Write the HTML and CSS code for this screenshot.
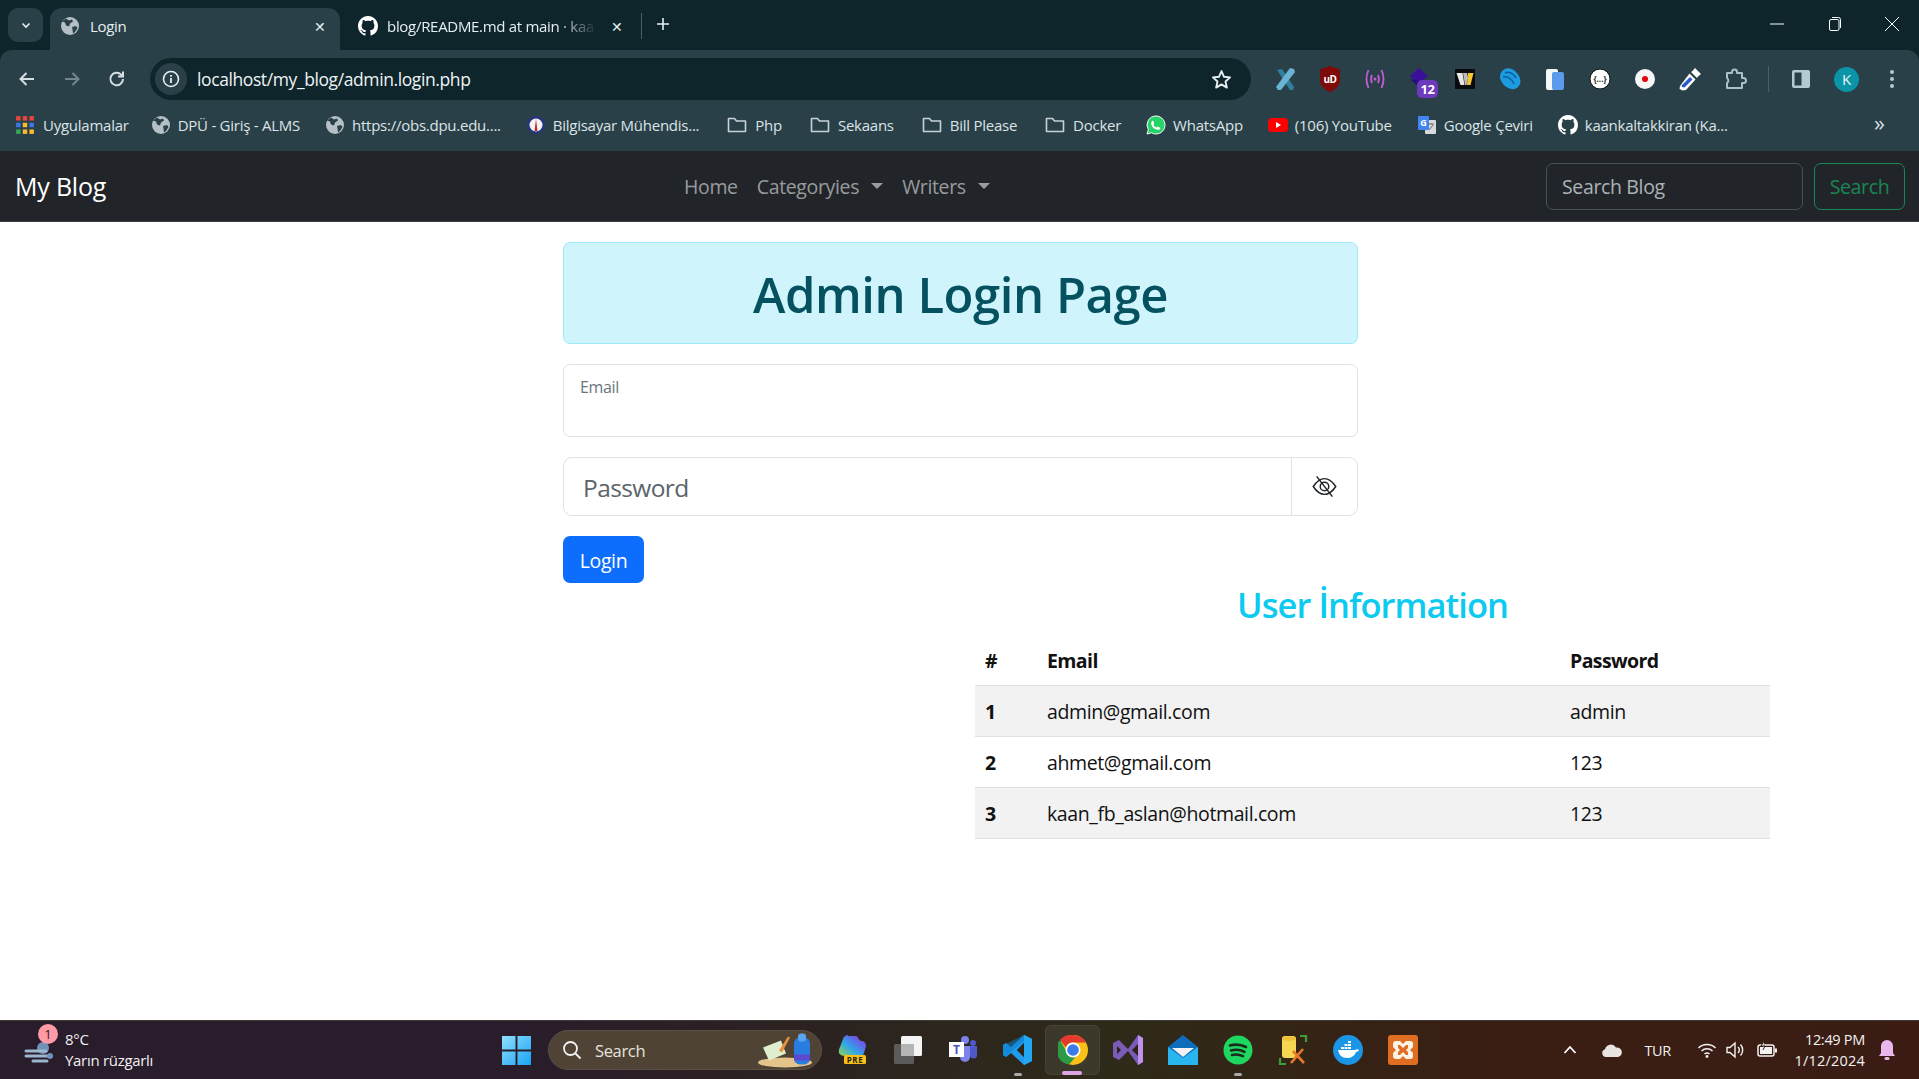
FILE: index.html
```html
<!DOCTYPE html>
<html lang="tr">
<head>
<meta charset="utf-8">
<title>Login</title>
<link rel="stylesheet" href="styles.css">
</head>
<body>
<svg class="defs" width="0" height="0" aria-hidden="true">
  <defs>
    <symbol id="globe" viewBox="0 0 20 20">
      <circle cx="10" cy="10" r="9" fill="#b4c0c6"/>
      <path d="M6 2.5l3 2 3-1 1 2-3 2-1 3-3-1-1-3-3-1zM12 11l4-1 1.5 2-2.5 4-2 1.5-.5-4z" fill="#2a3f47"/>
    </symbol>
    <symbol id="folder" viewBox="0 0 20 20">
      <path d="M1.5 16.5V3.500h6l2 2.500h9v10.500z" fill="none" stroke="#c7d2d6" stroke-width="1.600" stroke-linejoin="round"/>
    </symbol>
    <symbol id="github" viewBox="0 0 16 16">
      <path fill="#fff" d="M8 0C3.580 0 0 3.580 0 8c0 3.540 2.290 6.530 5.470 7.590.4.070.55-.17.55-.38 0-.19-.010-.82-.010-1.490-2.010.37-2.530-.49-2.690-.94-.09-.23-.48-.94-.82-1.130-.28-.15-.68-.52-.010-.53.63-.010 1.080.58 1.230.82.72 1.210 1.870.87 2.330.66.070-.52.28-.87.51-1.070-1.780-.2-3.640-.89-3.640-3.950 0-.87.31-1.590.82-2.150-.08-.2-.36-1.020.08-2.120 0 0 .67-.21 2.200.82.64-.18 1.320-.27 2-.27s1.360.09 2 .27c1.530-1.040 2.200-.82 2.200-.82.44 1.100.16 1.920.08 2.120.51.56.82 1.270.82 2.150 0 3.070-1.870 3.750-3.650 3.950.29.25.54.73.54 1.480 0 1.070-.010 1.930-.010 2.200 0 .21.15.46.55.38A8.010 8.010 0 0 0 16 8c0-4.420-3.580-8-8-8z"/>
    </symbol>
  </defs>
</svg>

<header class="browser">
  <div class="tabstrip">
    <div class="tab-menu"><svg class="i12" viewBox="0 0 12 12"><path d="M2.500 4.500L6 8l3.500-3.500" fill="none" stroke="#e6eef0" stroke-width="1.600"/></svg></div>
    <div class="tab tab-active">
      <svg class="i20"><use href="#globe"/></svg>
      <span class="tab-title">Login</span>
      <span class="tab-x">✕</span>
    </div>
    <div class="tab tab-idle">
      <svg class="i20"><use href="#github"/></svg>
      <span class="tab-title tab-fade">blog/README.md at main · kaa</span>
      <span class="tab-x">✕</span>
    </div>
    <span class="tab-sep"></span>
    <svg class="tab-new" viewBox="0 0 14 14"><path d="M7 1v12M1 7h12" stroke="#e6eef0" stroke-width="1.600"/></svg>
    <div class="win-controls">
      <svg class="i14" viewBox="0 0 14 14"><path d="M0 7h14" stroke="#fff" stroke-width="1"/></svg>
      <svg class="i14" viewBox="0 0 14 14"><rect x="1.500" y="2.500" width="9.500" height="11" rx="1.500" fill="none" stroke="#fff"/><path d="M4 .500h6.500a2 2 0 0 1 2 2V11" fill="none" stroke="#fff"/></svg>
      <svg class="i14" viewBox="0 0 14 14"><path d="M0 0l14 14M14 0L0 14" stroke="#fff" stroke-width="1"/></svg>
    </div>
  </div>

  <div class="toolbar">
    <div class="nav-btns">
      <svg class="i20" viewBox="0 0 20 20"><path d="M17 10H4M9.500 4L3.500 10l6 6" fill="none" stroke="#d5dfe3" stroke-width="2"/></svg>
      <svg class="i20" viewBox="0 0 20 20"><path d="M3 10h13M10.500 4l6 6-6 6" fill="none" stroke="#74868d" stroke-width="2"/></svg>
      <svg class="i20" viewBox="0 0 20 20"><path d="M16 10a6.300 6.300 0 1 1-1.800-4.400L16 7.500M16 2.500v5h-5" fill="none" stroke="#d5dfe3" stroke-width="2"/></svg>
    </div>
    <div class="omnibox">
      <span class="omni-info"><svg class="i18" viewBox="0 0 18 18"><circle cx="9" cy="9" r="7.500" fill="none" stroke="#e6eef0" stroke-width="1.600"/><path d="M9 8v5M9 5v1.800" stroke="#e6eef0" stroke-width="1.800"/></svg></span>
      <span class="omni-url">localhost/my_blog/admin.login.php</span>
      <svg class="omni-star" viewBox="0 0 20 20"><path d="M10 2l2.400 5.400 5.800.6-4.400 3.900 1.300 5.800L10 14.700l-5.100 3 1.300-5.800L1.800 8l5.800-.6z" fill="none" stroke="#e6eef0" stroke-width="1.800" stroke-linejoin="round"/></svg>
    </div>
    <div class="ext-row">
      <span class="ext"><svg class="i28" viewBox="0 0 28 28"><path d="M6 5l5-1 12 18-1 3-3 0z" fill="#2f7f9f"/><path d="M19 3l4 1 1 3-14 18-3 0-2-3z" fill="#6cb2d4"/></svg></span>
      <span class="ext"><svg class="i28" viewBox="0 0 28 28"><path d="M14 1l10 3.500V15c0 6-5 10-10 12C9 25 4 21 4 15V4.500z" fill="#7f0a0a"/><text x="14" y="18" class="ub">uD</text></svg></span>
      <span class="ext"><svg class="i28" viewBox="0 0 28 28"><g fill="none" stroke="#c25cd6" stroke-width="1.800"><path d="M7.500 5c-2.500 5.500-2.500 12.500 0 18M20.500 5c2.500 5.500 2.500 12.500 0 18M11 10c-1.200 2.500-1.200 5.500 0 8M17 10c1.200 2.500 1.200 5.500 0 8"/></g><circle cx="14" cy="14" r="1.500" fill="#c25cd6"/></svg></span>
      <span class="ext ext-badged">
        <svg class="i28" viewBox="0 0 28 28"><path d="M13 3l9 8-9 8-9-8z" fill="#3a109a"/><path d="M4 14l9 8 6-5" fill="#2a0c78"/></svg>
        <span class="ext-badge">12</span>
      </span>
      <span class="ext"><svg class="i28" viewBox="0 0 28 28"><rect x="4" y="4" width="20" height="20" fill="#0b0b0b"/><path d="M5.500 8h6l2 12h-4z" fill="#e8e8e8"/><path d="M12 8h4l1 5-1.500 7h-1.500z" fill="#bdbdbd"/><path d="M17 8h5.500l-3 12h-3.500z" fill="#f4c62f"/></svg></span>
      <span class="ext"><svg class="i28" viewBox="0 0 28 28"><path d="M5 8c3-6 10-6 15-1s6 11 2 15-10 2-14-2-5-9-3-12z" fill="#1b9be0"/><path d="M9 8c4-2 9 1 11 5M7 12c3-1 9 1 11 7" fill="none" stroke="#0d5f9a" stroke-width="1.500"/></svg></span>
      <span class="ext"><svg class="i28" viewBox="0 0 28 28"><rect x="5" y="4" width="12" height="21" rx="2" fill="#f4f7f8"/><rect x="11" y="7" width="12" height="18" rx="2" fill="#5a9bee"/></svg></span>
      <span class="ext"><svg class="i28" viewBox="0 0 28 28"><circle cx="14" cy="14" r="10" fill="#fff" stroke="#111" stroke-width="1"/><text x="14" y="17" class="dots">{...}</text></svg></span>
      <span class="ext"><svg class="i28" viewBox="0 0 28 28"><circle cx="14" cy="14" r="10" fill="#f6f6f6"/><circle cx="14" cy="14" r="3" fill="#e8000d"/></svg></span>
      <span class="ext"><svg class="i28" viewBox="0 0 28 28"><path d="M19 3l6 6-3 2.500-1 1.500-6-6 1.500-1z" fill="#fff"/><path d="M13.500 8.500l6 6L10 25l-3.500.5-3-1.500.5-3z" fill="#fff"/><path d="M14 12l2.500 2.500-8 8-2.500-.5-.5-1.500z" fill="#2a5ac8"/></svg></span>
      <span class="ext"><svg class="i24" viewBox="0 0 24 24"><path d="M4 6h5V5a2.500 2.500 0 0 1 5 0v1h5v5h1.500a2.500 2.500 0 0 1 0 5H19v5H4v-5a3 3 0 0 0 0-5z" fill="none" stroke="#a9c0ca" stroke-width="2" stroke-linejoin="round"/></svg></span>
      <span class="ext-sep"></span>
      <span class="ext ext-panel"><svg class="i24" viewBox="0 0 24 24"><rect x="3" y="3" width="18" height="18" rx="2" fill="#b3cad4"/><rect x="5.500" y="5.500" width="7" height="13" fill="#2a4048"/></svg></span>
      <span class="avatar">K</span>
      <span class="kebab"><i></i><i></i><i></i></span>
    </div>
  </div>

  <div class="bookmarks">
    <a class="bm bm-first"><svg class="i20" viewBox="0 0 18 18"><g><rect x="1" y="1" width="4" height="4" fill="#e8453c"/><rect x="7" y="1" width="4" height="4" fill="#e8453c"/><rect x="13" y="1" width="4" height="4" fill="#e8453c"/><rect x="1" y="7" width="4" height="4" fill="#3b78e7"/><rect x="7" y="7" width="4" height="4" fill="#f9bb2d"/><rect x="13" y="7" width="4" height="4" fill="#3b78e7"/><rect x="1" y="13" width="4" height="4" fill="#34a853"/><rect x="7" y="13" width="4" height="4" fill="#f9bb2d"/><rect x="13" y="13" width="4" height="4" fill="#f9bb2d"/></g></svg><span>Uygulamalar</span></a>
    <a class="bm"><svg class="i20"><use href="#globe"/></svg><span>DPÜ - Giriş - ALMS</span></a>
    <a class="bm"><svg class="i20"><use href="#globe"/></svg><span>https://obs.dpu.edu....</span></a>
    <a class="bm"><svg class="i20" viewBox="0 0 20 20"><circle cx="10" cy="10" r="9" fill="#27357e"/><circle cx="10" cy="10" r="6.500" fill="#f4f4f4"/><path d="M10 4l1.500 12h-3z" fill="#c02a2a"/></svg><span>Bilgisayar Mühendis...</span></a>
    <a class="bm bm-folder"><svg class="i20"><use href="#folder"/></svg><span>Php</span></a>
    <a class="bm bm-folder"><svg class="i20"><use href="#folder"/></svg><span>Sekaans</span></a>
    <a class="bm bm-folder"><svg class="i20"><use href="#folder"/></svg><span>Bill Please</span></a>
    <a class="bm bm-folder"><svg class="i20"><use href="#folder"/></svg><span>Docker</span></a>
    <a class="bm"><svg class="i20" viewBox="0 0 20 20"><path d="M10 1a9 9 0 0 0-7.700 13.600L1 19l4.500-1.200A9 9 0 1 0 10 1z" fill="#25d366" stroke="#fff" stroke-width="1"/><path d="M7 5.500l1.300 2.800-.9 1.100c.7 1.500 1.800 2.500 3.300 3.200l1.100-1 2.700 1.300c-.2 1.500-1.700 2.200-3 1.900C8 14.200 5.800 12 5.200 9c-.3-1.500.4-3 1.800-3.500z" fill="#fff"/></svg><span>WhatsApp</span></a>
    <a class="bm"><svg class="i20" viewBox="0 0 20 20"><rect x="0" y="3" width="20" height="14" rx="4" fill="#f00"/><path d="M8 7l5 3-5 3z" fill="#fff"/></svg><span>(106) YouTube</span></a>
    <a class="bm"><svg class="i20" viewBox="0 0 20 20"><rect x="8" y="5" width="11" height="14" rx="1" fill="#d4dadd"/><rect x="1" y="1" width="11" height="14" rx="1" fill="#4285f4"/><text x="6.500" y="11" class="gt">G</text><path d="M11 9h6M14 8v1M12 15l4-5" stroke="#666" fill="none"/></svg><span>Google Çeviri</span></a>
    <a class="bm"><svg class="i20"><use href="#github"/></svg><span>kaankaltakkiran (Ka...</span></a>
    <span class="bm-more">»</span>
  </div>
</header>

<nav class="navbar">
  <a class="brand">My Blog</a>
  <ul class="nav-links">
    <li>Home</li>
    <li class="caret">Categoryies</li>
    <li class="caret">Writers</li>
  </ul>
  <form class="nav-search">
    <input class="nav-input" type="text" placeholder="Search Blog">
    <button class="nav-btn" type="button">Search</button>
  </form>
</nav>

<main class="page">
  <section class="login">
    <div class="alert"><h1>Admin Login Page</h1></div>
    <div class="floating"><label>Email</label></div>
    <div class="pw-group">
      <input class="pw-input" type="text" placeholder="Password">
      <span class="pw-eye"><svg class="eye" viewBox="0 0 24 24"><g fill="none" stroke="#212529" stroke-width="1.300"><path d="M2 12c3-4.500 6.300-7 10-7s7 2.500 10 7c-3 4.500-6.300 7-10 7s-7-2.500-10-7z"/><circle cx="12" cy="12" r="3.800"/><path d="M5 3l14 18"/></g></svg></span>
    </div>
    <button class="login-btn" type="button">Login</button>
  </section>
  <section class="users">
    <h3>User İnformation</h3>
    <table class="users-table">
      <thead><tr><th class="c-id">#</th><th class="c-mail">Email</th><th>Password</th></tr></thead>
      <tbody>
        <tr><th>1</th><td>admin@gmail.com</td><td>admin</td></tr>
        <tr><th>2</th><td>ahmet@gmail.com</td><td>123</td></tr>
        <tr><th>3</th><td>kaan_fb_aslan@hotmail.com</td><td>123</td></tr>
      </tbody>
    </table>
  </section>
</main>

<footer class="taskbar">
  <div class="weather">
    <span class="weather-icon">
      <svg width="32" height="30" viewBox="0 0 32 30"><circle cx="20" cy="11" r="6" fill="#6f93b8"/><path d="M3 14h20M3 19h24M10 24h14" stroke="#9db6cf" stroke-width="3" stroke-linecap="round"/><circle cx="27" cy="19" r="3" fill="#6f93b8"/></svg>
      <span class="weather-badge">1</span>
    </span>
    <div class="weather-text"><span>8°C</span><span>Yarın rüzgarlı</span></div>
  </div>
  <div class="task-center">
    <span class="task win"><svg class="i30" viewBox="0 0 30 30"><defs><linearGradient id="w" x1="0" y1="0" x2="1" y2="1"><stop offset="0" stop-color="#8fe0fb"/><stop offset="1" stop-color="#1aa2f5"/></linearGradient></defs><path d="M0 0h14v14H0zM16 0h14v14H16zM0 16h14v14H0zM16 16h14v14H16z" fill="url(#w)"/></svg></span>
    <div class="task-search">
      <svg class="i20" viewBox="0 0 20 20"><circle cx="8.500" cy="8.500" r="6.500" fill="none" stroke="#f2f2f2" stroke-width="1.800"/><path d="M13 13l5.500 5.500" stroke="#f2f2f2" stroke-width="1.800"/></svg>
      <span>Search</span>
      <svg class="search-art" viewBox="0 0 60 34"><ellipse cx="28" cy="29" rx="27" ry="5" fill="#e4c48a"/><path d="M6 14l18-7 5 13-17 7z" fill="#dfeecf"/><path d="M22 17l9-14 2 1-8 15z" fill="#e98e3a"/><rect x="37" y="4" width="16" height="27" rx="6" fill="#2a7de0"/><rect x="41" y="0" width="8" height="8" rx="3" fill="#5aa5f0"/><rect x="37" y="21" width="16" height="6" fill="#5a4ad0"/></svg>
    </div>
    <span class="task"><svg class="i30" viewBox="0 0 30 30"><defs><linearGradient id="cp" x1="0" y1="1" x2="1" y2="0"><stop offset="0" stop-color="#9cd34a"/><stop offset=".4" stop-color="#2fa8e6"/><stop offset=".75" stop-color="#6a5ae8"/><stop offset="1" stop-color="#e86ad0"/></linearGradient></defs><path d="M10 1h7c2 0 3 1 3.500 3L23 6c3 0 5 2 5 5l-2 7c-.5 2-2 3-4 3H7c-3 0-5-1-6-3-.5-2 0-4 1-6l3-8c.5-2 3-4 5-4z" fill="url(#cp)"/><rect x="6" y="20" width="22" height="9" rx="1.500" fill="#fcbf14"/><text x="17" y="27.500" class="pre">PRE</text></svg></span>
    <span class="task"><svg class="i30" viewBox="0 0 30 30"><rect x="1" y="9" width="20" height="20" rx="1.500" fill="#5b5b5b"/><rect x="8" y="1" width="21" height="20" rx="1.500" fill="#f4f4f4"/><rect x="8" y="9" width="13" height="12" fill="#b5b5b5"/></svg></span>
    <span class="task"><svg class="i30" viewBox="0 0 30 30"><circle cx="17" cy="5" r="4" fill="#7b83eb"/><circle cx="25" cy="8" r="3" fill="#5059c9"/><path d="M12 11h10v11a5 5 0 0 1-10 0z" fill="#7b83eb"/><path d="M22 11h7v9a3.500 3.500 0 0 1-7 0z" fill="#5059c9"/><rect x="1" y="7" width="15" height="15" fill="#fff"/><text x="8.500" y="19" class="teams">T</text></svg></span>
    <span class="task task-run"><svg class="i30" viewBox="0 0 30 30"><path d="M21 0l8 4v22l-8 4-13-12-5 4-3-2v-10l3-2 5 4zM21 8l-7 7 7 7z" fill="#1f9cf0" fill-rule="evenodd"/><path d="M21 0l8 4v22l-8 4z" fill="#23a7f2"/><path d="M21 8l-7 7 7 7z" fill="#2c2618"/><path d="M3 9L0 11v8l3 2 18-15V0z" fill="#0a7ac8" opacity=".55"/></svg></span>
    <span class="task task-active"><svg class="i30" viewBox="0 0 30 30"><circle cx="15" cy="15" r="15" fill="#fbc116"/><path d="M15 0a15 15 0 0 1 13 7.500H15a7.500 7.500 0 0 0-7 5L2 5A15 15 0 0 1 15 0z" fill="#e33b2e"/><path d="M2 5l6.500 11.500a7.500 7.500 0 0 0 9 5.500L11 29.500A15 15 0 0 1 2 5z" fill="#2b9b45"/><circle cx="15" cy="15" r="7.500" fill="#fff"/><circle cx="15" cy="15" r="5.800" fill="#3a7bec"/></svg></span>
    <span class="task"><svg class="i30" viewBox="0 0 30 30"><path d="M0 8l6-3 9 9L25 0l5 3v24l-5 3-10-14-9 9-6-3z" fill="#7a5bb8"/><path d="M25 0l5 3v24l-5 3z" fill="#bf92ec"/><path d="M25 9l-6 6 6 6zM4 11v8l4-4z" fill="#2c2218"/></svg></span>
    <span class="task"><svg class="i30" viewBox="0 0 30 30"><path d="M15 0l15 12v18H0V12z" fill="#0f6cbd"/><path d="M4 13h22L15 22z" fill="#f2f2f2"/><path d="M0 12l15 11 15-11v18H0z" fill="#29b6f0"/></svg></span>
    <span class="task task-run"><svg class="i30" viewBox="0 0 30 30"><circle cx="15" cy="15" r="14.500" fill="#1ed760"/><g fill="none" stroke="#1a2a1c" stroke-width="2.600" stroke-linecap="round"><path d="M7 10.500c5.500-1.500 11-1 16 1.500"/><path d="M8 15.500c4.500-1.200 9.500-.8 13.500 1.400"/><path d="M9 20c4-.9 7.500-.6 11 1.200"/></g></svg></span>
    <span class="task"><svg class="i30" viewBox="0 0 30 30"><rect x="4" y="1" width="14" height="22" rx="3" fill="#f7d752"/><ellipse cx="11" cy="3.500" rx="7" ry="2.500" fill="#f0c23a"/><path d="M22 1h6v6M2 23v6h6" fill="none" stroke="#3c9d3c" stroke-width="2.200"/><path d="M13 28l12-14M26 28L15 16" stroke="#e8772e" stroke-width="2.600"/></svg></span>
    <span class="task"><svg class="i30" viewBox="0 0 30 30"><circle cx="15" cy="15" r="15" fill="#1b95e6"/><path d="M5 15h17c1-.8 2.800-1 4 0-.5 1.500-1.800 2-3 2-1.500 4-5 6-9 6-5 0-8-3-9-8z" fill="#fff"/><path d="M8 12h3v2H8zM11.500 12h3v2h-3zM15 12h3v2h-3zM11.500 9h3v2h-3zM15 9h3v2h-3zM15 6h3v2h-3z" fill="#fff"/></svg></span>
    <span class="task"><svg class="i30" viewBox="0 0 30 30"><rect width="30" height="30" rx="3" fill="#df6e22"/><path d="M8 6h4l3 3 3-3h4a3 3 0 0 1 3 3v3l-3 3 3 3v3a3 3 0 0 1-3 3h-4l-3-3-3 3H8a3 3 0 0 1-3-3v-3l3-3-3-3V9a3 3 0 0 1 3-3zM10 10v3l2 2-2 2v3h2l3-3 3 3h2v-3l-2-2 2-2v-3h-2l-3 3-3-3z" fill="#fdf2e6" fill-rule="evenodd"/></svg></span>
  </div>
  <div class="tray">
    <svg class="tray-chev" viewBox="0 0 14 14"><path d="M1.500 10L7 4l5.500 6" fill="none" stroke="#fff" stroke-width="1.800"/></svg>
    <svg class="tray-cloud" viewBox="0 0 22 16"><path d="M5 15a4 4 0 0 1-1-7.800A6 6 0 0 1 15 5.500a4.800 4.800 0 0 1 2 9.500z" fill="#e8e4e0"/></svg>
    <span class="tray-lang">TUR</span>
    <svg class="tray-wifi" viewBox="0 0 20 20"><g fill="none" stroke="#f2f2f2" stroke-width="1.500"><path d="M1.500 8a12 12 0 0 1 17 0"/><path d="M4.500 11a8 8 0 0 1 11 0"/><path d="M7.500 14a4 4 0 0 1 5 0"/></g><circle cx="10" cy="16.500" r="1.400" fill="#f2f2f2"/></svg>
    <svg class="tray-vol" viewBox="0 0 20 20"><path d="M2 7.500h3L10 3v14l-5-4.500H2z" fill="none" stroke="#f2f2f2" stroke-width="1.400"/><path d="M13 7a4 4 0 0 1 0 6M15.500 4.500a8 8 0 0 1 0 11" fill="none" stroke="#f2f2f2" stroke-width="1.400"/></svg>
    <svg class="tray-bat" viewBox="0 0 22 20"><rect x="2" y="5" width="16" height="11" rx="2" fill="none" stroke="#f2f2f2" stroke-width="1.500"/><rect x="4" y="7" width="12" height="7" fill="#f2f2f2"/><rect x="19" y="8.500" width="2" height="4" fill="#f2f2f2"/><path d="M8 1L5 6h4l-2 4" stroke="#2d1a14" fill="#f2f2f2"/></svg>
    <div class="clock"><span>12:49 PM</span><span class="clock-date">1/12/2024</span></div>
    <svg class="tray-bell" viewBox="0 0 18 22"><path d="M9 1a6 6 0 0 1 6 6v7l2 3H1l2-3V7a6 6 0 0 1 6-6z" fill="#e9b6ee"/><rect x="6.500" y="18" width="5" height="3" rx="1.500" fill="#e9b6ee"/></svg>
  </div>
</footer>
</body>
</html>
```
FILE: styles.css
```css
* { box-sizing: border-box; }
html, body { margin: 0; height: 100%; }
body {
  display: flex;
  flex-direction: column;
  width: 1919px;
  height: 1079px;
  overflow: hidden;
  background: #fff;
  color: #212529;
  font-family: "Open Sans", "Liberation Sans", sans-serif;
}
.defs { position: absolute; }
svg { display: block; flex: none; }
.i12 { width: 12px; height: 12px; }
.i14 { width: 14px; height: 14px; }
.i18 { width: 18px; height: 18px; }
.i20 { width: 20px; height: 20px; }
.i24 { width: 24px; height: 24px; }
.i28 { width: 28px; height: 28px; }
.i30 { width: 30px; height: 30px; }

/* browser chrome */
.browser { background: #0f252c; color: #e6eef0; flex: none; }
.tabstrip { height: 50px; display: flex; align-items: flex-end; padding-left: 8px; position: relative; }
.tab-menu {
  width: 35px; height: 34px; margin-bottom: 8px;
  display: flex; align-items: center; justify-content: center;
  background: #2a4048; border-radius: 10px;
}
.tab { height: 42px; display: flex; align-items: center; font-size: 15px; letter-spacing: -.3px; }
.tab-active {
  width: 290px; margin-left: 7px; padding: 0 13px 6px 10px;
  background: #2a4048; border-radius: 12px 12px 0 0;
}
.tab-idle { width: 290px; padding: 0 6px 6px 18px; }
.tab-active .tab-title { margin-left: 10px; flex: 1; }
.tab-idle .tab-title { margin-left: 9px; flex: 1; min-width: 0; margin-right: 13px; }
.tab-title { white-space: nowrap; overflow: hidden; }
.tab-fade { -webkit-mask-image: linear-gradient(90deg, #000 82%, transparent 100%); mask-image: linear-gradient(90deg, #000 82%, transparent 100%); }
.tab-x { font-size: 14px; width: 14px; text-align: center; color: #e6eef0; letter-spacing: 0; flex: none; }
.tab-sep { width: 1px; height: 26px; background: #4b5f66; margin: 0 0 11px 11px; }
.tab-new { width: 14px; height: 14px; margin: 0 0 19px 14px; }
.win-controls {
  margin-left: auto; align-self: center; display: flex; gap: 43.500px;
  padding-right: 20px; margin-top: -2px;
}

.toolbar {
  height: 51px; background: #2a4048; border-radius: 12px 12px 0 0;
  display: flex; align-items: flex-end; padding: 0 0 1px 0; position: relative;
}
.nav-btns { display: flex; gap: 25px; width: 150px; padding-left: 17px; height: 42px; align-items: center; margin-bottom: 0; }
.omnibox {
  width: 1101px; height: 42px; background: #0f252c; border-radius: 21px;
  display: flex; align-items: center; padding: 0 19px 0 5px;
}
.omni-info { width: 32px; height: 32px; border-radius: 50%; background: #2a4048; display: flex; align-items: center; justify-content: center; }
.omni-url { margin-left: 10px; font-size: 17.500px; letter-spacing: -.4px; color: #eef3f4; flex: 1; white-space: nowrap; }
.omni-star { width: 21px; height: 21px; }
.ext-row { display: flex; align-items: center; height: 42px; padding-left: 11px; }
.ext { width: 45px; height: 42px; display: flex; align-items: center; justify-content: center; position: relative; }
.ext-badge {
  position: absolute; left: 20px; top: 22px; width: 21px; height: 18px; border-radius: 5px;
  background: #6d39bd; color: #fff; font-size: 13px; font-weight: 700; text-align: center; line-height: 18px; letter-spacing: -.5px;
}
.ub { font: 700 10px "Open Sans", sans-serif; fill: #fff; text-anchor: middle; letter-spacing: -.5px; }
.dots { font: 700 8px "Open Sans", sans-serif; fill: #222; text-anchor: middle; }
.gt { font: 700 9px "Open Sans", sans-serif; fill: #fff; text-anchor: middle; }
.pre { font: 700 8px "Open Sans", sans-serif; fill: #222; text-anchor: middle; letter-spacing: .5px; }
.teams { font: 700 12px "Open Sans", sans-serif; fill: #4b53bc; text-anchor: middle; }
.ext-sep { width: 1px; height: 26px; background: #4b5f66; margin: 0 10px 0 11px; }
.ext-panel { width: 44px; }
.avatar {
  width: 25px; height: 25px; flex: none; border-radius: 50%; background: #0b93a8; color: #e8f6f8;
  font-size: 15px; display: flex; align-items: center; justify-content: center; margin-left: 11px;
}
.kebab { display: flex; flex-direction: column; gap: 3px; margin-left: 31px; }
.kebab i { width: 4px; height: 4px; border-radius: 50%; background: #b3cad4; }

.bookmarks {
  height: 50px; background: #2a4048; display: flex; align-items: center;
  padding: 0 0 2px 15px; gap: 25px; font-size: 15px; color: #dbe3e6; letter-spacing: -.25px;
  position: relative;
}
.bm { display: flex; align-items: center; gap: 7px; white-space: nowrap; }
.bm-first { gap: 8px; margin-right: -3px; }
.bm-folder { gap: 8px; margin-left: 3px; }
.bm-more { position: absolute; left: 1874px; top: 9px; font-size: 22px; line-height: 24px; color: #d5dfe3; }

/* navbar */
.navbar {
  height: 71px; flex: none; background: #212529;
  border-bottom: 1px solid #3a3d44;
  display: flex; align-items: center; padding: 0 14px 0 15px; position: relative;
}
.brand { font-size: 25px; color: #fff; letter-spacing: -.2px; width: 91px; white-space: nowrap; }
.nav-links {
  list-style: none; margin: 0 0 0 578px; padding: 0; display: flex; gap: 19px;
  font-size: 19.500px; color: rgba(255,255,255,.55); letter-spacing: -.35px;
}
.caret { display: flex; align-items: center; }
.caret::after {
  content: ""; margin-left: 12px; border-top: 6px solid rgba(255,255,255,.55);
  border-left: 6px solid transparent; border-right: 6px solid transparent;
}
.nav-search { margin-left: auto; display: flex; gap: 11px; }
.nav-input {
  width: 257px; height: 47px; background: #212529; border: 1px solid #495057; border-radius: 7px;
  padding: 0 15px; font: 19.500px "Open Sans", sans-serif; letter-spacing: -.35px; color: #dee2e6;
}
.nav-input::placeholder { color: rgba(222,226,230,.75); opacity: 1; }
.nav-btn {
  width: 91px; height: 47px; background: transparent; border: 1px solid #198754; border-radius: 7px;
  color: #198754; font: 19.500px "Open Sans", sans-serif; letter-spacing: -.35px; padding: 0;
}

/* page */
.page { flex: 1; min-height: 0; padding: 20px 0 0 563px; overflow: hidden; }
.login { width: 795px; }
.alert {
  height: 102px; padding-top: 2px; background: #cff4fc; border: 1px solid #9eeaf9; border-radius: 7px;
  display: flex; align-items: center; justify-content: center; color: #055160; margin-bottom: 20px;
}
.alert h1 { margin: 0; font-size: 49px; font-weight: 600; letter-spacing: -.45px; line-height: 1.2; }
.floating {
  height: 73px; border: 1px solid #dee2e6; border-radius: 7px; margin-bottom: 20px;
  padding: 12px 16px; font-size: 16px; letter-spacing: -.35px; color: #6c757d; line-height: 20px;
}
.pw-group { display: flex; height: 59px; border: 1px solid #dee2e6; border-radius: 9px; margin-bottom: 20px; }
.pw-input {
  flex: 1; min-width: 0; border: 0; background: none; border-radius: 9px 0 0 9px; padding: 2px 19px 0;
  font: 24.500px "Open Sans", sans-serif; letter-spacing: -.6px; color: #212529;
}
.pw-input::placeholder { color: #5c636a; opacity: 1; }
.pw-eye { width: 66px; border-left: 1px solid #dee2e6; display: flex; align-items: center; justify-content: center; }
.eye { width: 27px; height: 27px; }
.login-btn {
  display: block; width: 81px; height: 47px; background: #0d6efd; border: 0; border-radius: 7px;
  color: #fff; font: 19.500px "Open Sans", sans-serif; letter-spacing: -.35px; padding: 2px 0 0;
}
.users { width: 795px; margin-left: 412px; }
.users h3 {
  margin: 0; height: 51px; text-align: center; color: #0dcaf0;
  font-size: 34.500px; font-weight: 600; line-height: 46px; letter-spacing: -.95px;
  position: relative; top: -1px;
}
.users-table { width: 100%; border-collapse: collapse; table-layout: fixed; font-size: 19.500px; letter-spacing: -.38px; color: #111; }
.users-table th, .users-table td { height: 51px; padding: 2px 10px 0; text-align: left; border-bottom: 1px solid #dee2e6; font-weight: 400; }
.users-table th { font-weight: 700; letter-spacing: -.6px; }
.c-id { width: 62px; }
.c-mail { width: 523px; }
.users-table tbody tr:nth-child(odd) { background: #f2f2f2; }

/* taskbar */
.taskbar {
  height: 59px; flex: none; display: flex; align-items: center; color: #f2f2f2;
  border-top: 1px solid #3d3a38;
  background: linear-gradient(90deg, #291c2b 0%, #291c2c 25%, #2c241f 45%, #2e2a19 58%, #3a1e13 78%, #3a1c14 100%);
}
.weather { width: 494px; display: flex; align-items: center; padding-left: 23px; flex: none; }
.weather-icon { position: relative; width: 32px; height: 30px; margin-top: 4px; }
.weather-badge {
  position: absolute; left: 15px; top: -13px; width: 20px; height: 20px; border-radius: 50%;
  background: #ff9aa6; color: #3a1418; font-size: 13px; text-align: center; line-height: 20px;
}
.weather-text { display: flex; flex-direction: column; margin-left: 10px; font-size: 15px; line-height: 21px; letter-spacing: -.3px; }
.task-center { display: flex; align-items: center; }
.task { width: 55px; height: 50px; display: flex; align-items: center; justify-content: center; position: relative; flex: none; }
.win { margin-left: -5px; width: 54px; margin-right: 5px; }
.win svg { width: 29px; height: 29px; }
.task-search {
  width: 274px; height: 40px; border-radius: 20px; background: #4f4335; border: 1px solid #5b5044;
  display: flex; align-items: center; padding-left: 13px; font-size: 16.500px; letter-spacing: -.35px; position: relative; margin-right: 3px;
}
.task-search span { margin-left: 13px; color: #e6e3df; }
.search-art { position: absolute; right: 4px; top: 2px; width: 60px; height: 35px; }
.task-run::after {
  content: ""; position: absolute; left: 23.500px; bottom: -1px; width: 8px; height: 3px; border-radius: 2px; background: #aaa;
}
.task-active { background: rgba(255,255,255,.07); border-radius: 6px; border: 1px solid rgba(255,255,255,.06); }
.task-active::after {
  content: ""; position: absolute; left: 16px; bottom: -1px; width: 20px; height: 4px; border-radius: 2px; background: #dca4e4;
}
.tray { margin-left: auto; display: flex; align-items: center; padding-right: 23px; font-size: 14.500px; letter-spacing: -.3px; }
.tray-chev { width: 14px; height: 14px; margin-right: 24px; }
.tray-cloud { width: 22px; height: 16px; margin-right: 21px; }
.tray-lang { margin-right: 26px; }
.tray-wifi { width: 20px; height: 20px; margin-right: 8px; }
.tray-vol { width: 20px; height: 20px; margin-right: 11px; }
.tray-bat { width: 22px; height: 20px; }
.clock { width: 87px; display: flex; flex-direction: column; align-items: flex-end; line-height: 21px; margin-right: 13px; }
.clock-date { letter-spacing: .2px; }
.tray-bell { width: 18px; height: 22px; }
```
